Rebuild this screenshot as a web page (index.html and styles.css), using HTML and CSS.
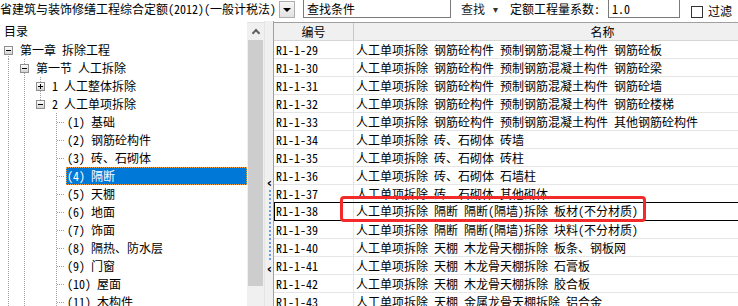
FILE: index.html
```html
<!DOCTYPE html>
<html lang="zh-CN">
<head>
<meta charset="UTF-8">
<title>定额查询</title>
<link rel="stylesheet" href="styles.css">
</head>
<body>
<div class="app">
  <div class="toolbar">
    <div class="combo-text">省建筑与装饰修缮工程综合定额(2012)(一般计税法)</div>
    <div class="combo-btn"><span class="tri"></span></div>
    <div class="search-box">查找条件</div>
    <div class="find">查找</div>
    <div class="find-arrow">▾</div>
    <div class="coef-label">定额工程量系数:</div>
    <div class="coef-box">1.0</div>
    <div class="check"></div>
    <div class="check-label">过滤</div>
  </div>

  <div class="main">
    <div class="left">
      <div class="tree-pane">
        <div class="pane-title">目录</div>
        <div class="tree">
          <div class="node">
            <span class="cell down"><span class="toggle minus"></span></span>
            <span class="label">第一章 拆除工程</span>
          </div>
          <div class="node">
            <span class="cell vline"></span>
            <span class="cell updown"><span class="toggle minus"></span></span>
            <span class="label">第一节 人工拆除</span>
          </div>
          <div class="node">
            <span class="cell vline"></span>
            <span class="cell vline"></span>
            <span class="cell updown"><span class="toggle plus"></span></span>
            <span class="label">1 人工整体拆除</span>
          </div>
          <div class="node">
            <span class="cell vline"></span>
            <span class="cell vline"></span>
            <span class="cell up"><span class="toggle minus"></span></span>
            <span class="label">2 人工单项拆除</span>
          </div>
          <div class="node">
            <span class="cell vline"></span><span class="cell vline"></span><span class="cell"></span><span class="cell branch"></span>
            <span class="label leaf">(1) 基础</span>
          </div>
          <div class="node">
            <span class="cell vline"></span><span class="cell vline"></span><span class="cell"></span><span class="cell branch"></span>
            <span class="label leaf">(2) 钢筋砼构件</span>
          </div>
          <div class="node">
            <span class="cell vline"></span><span class="cell vline"></span><span class="cell"></span><span class="cell branch"></span>
            <span class="label leaf">(3) 砖、石砌体</span>
          </div>
          <div class="node">
            <span class="cell vline"></span><span class="cell vline"></span><span class="cell"></span><span class="cell branch"></span>
            <span class="label leaf selected">(4) 隔断</span>
          </div>
          <div class="node">
            <span class="cell vline"></span><span class="cell vline"></span><span class="cell"></span><span class="cell branch"></span>
            <span class="label leaf">(5) 天棚</span>
          </div>
          <div class="node">
            <span class="cell vline"></span><span class="cell vline"></span><span class="cell"></span><span class="cell branch"></span>
            <span class="label leaf">(6) 地面</span>
          </div>
          <div class="node">
            <span class="cell vline"></span><span class="cell vline"></span><span class="cell"></span><span class="cell branch"></span>
            <span class="label leaf">(7) 饰面</span>
          </div>
          <div class="node">
            <span class="cell vline"></span><span class="cell vline"></span><span class="cell"></span><span class="cell branch"></span>
            <span class="label leaf">(8) 隔热、防水层</span>
          </div>
          <div class="node">
            <span class="cell vline"></span><span class="cell vline"></span><span class="cell"></span><span class="cell branch"></span>
            <span class="label leaf">(9) 门窗</span>
          </div>
          <div class="node">
            <span class="cell vline"></span><span class="cell vline"></span><span class="cell"></span><span class="cell branch"></span>
            <span class="label leaf">(10) 屋面</span>
          </div>
          <div class="node">
            <span class="cell vline"></span><span class="cell vline"></span><span class="cell"></span><span class="cell branch"></span>
            <span class="label leaf">(11) 木构件</span>
          </div>
        </div>
      </div>
      <div class="vscroll">
        <div class="sb-up"><span class="chev"></span></div>
        <div class="sb-thumb"></div>
        <div class="sb-track"></div>
      </div>
    </div>

    <div class="splitter">
      <span class="sp-arrow">‹</span>
      <span class="sp-dots"></span>
      <span class="sp-arrow">‹</span>
    </div>

    <div class="right">
      <div class="grid">
        <div class="row head">
          <div class="c-code">编号</div>
          <div class="c-name">名称</div>
        </div>
        <div class="row"><div class="c-code">R1-1-29</div><div class="c-name">人工单项拆除 钢筋砼构件 预制钢筋混凝土构件 钢筋砼板</div></div>
        <div class="row"><div class="c-code">R1-1-30</div><div class="c-name">人工单项拆除 钢筋砼构件 预制钢筋混凝土构件 钢筋砼梁</div></div>
        <div class="row"><div class="c-code">R1-1-31</div><div class="c-name">人工单项拆除 钢筋砼构件 预制钢筋混凝土构件 钢筋砼墙</div></div>
        <div class="row"><div class="c-code">R1-1-32</div><div class="c-name">人工单项拆除 钢筋砼构件 预制钢筋混凝土构件 钢筋砼楼梯</div></div>
        <div class="row"><div class="c-code">R1-1-33</div><div class="c-name">人工单项拆除 钢筋砼构件 预制钢筋混凝土构件 其他钢筋砼构件</div></div>
        <div class="row"><div class="c-code">R1-1-34</div><div class="c-name">人工单项拆除 砖、石砌体 砖墙</div></div>
        <div class="row"><div class="c-code">R1-1-35</div><div class="c-name">人工单项拆除 砖、石砌体 砖柱</div></div>
        <div class="row"><div class="c-code">R1-1-36</div><div class="c-name">人工单项拆除 砖、石砌体 石墙柱</div></div>
        <div class="row"><div class="c-code">R1-1-37</div><div class="c-name">人工单项拆除 砖、石砌体 其他砌体</div></div>
        <div class="row focus"><div class="c-code">R1-1-38</div><div class="c-name">人工单项拆除 隔断 隔断(隔墙)拆除 板材(不分材质)</div></div>
        <div class="row"><div class="c-code">R1-1-39</div><div class="c-name">人工单项拆除 隔断 隔断(隔墙)拆除 块料(不分材质)</div></div>
        <div class="row"><div class="c-code">R1-1-40</div><div class="c-name">人工单项拆除 天棚 木龙骨天棚拆除 板条、钢板网</div></div>
        <div class="row"><div class="c-code">R1-1-41</div><div class="c-name">人工单项拆除 天棚 木龙骨天棚拆除 石膏板</div></div>
        <div class="row"><div class="c-code">R1-1-42</div><div class="c-name">人工单项拆除 天棚 木龙骨天棚拆除 胶合板</div></div>
        <div class="row"><div class="c-code">R1-1-43</div><div class="c-name">人工单项拆除 天棚 金属龙骨天棚拆除 铝合金</div></div>
      </div>
      <div class="mark"></div>
    </div>
  </div>
</div>
</body>
</html>
```

FILE: styles.css
```css
body {
    margin: 0;
    background: #fff;
    font-family: "Noto Sans Mono CJK SC", "Noto Sans CJK SC", "DejaVu Sans", sans-serif;
    font-size: 12px;
    color: #000;
}
.app {
    width: 738px;
    height: 306px;
    overflow: hidden;
}

/* toolbar */
.toolbar {
    height: 21px;
    display: flex;
    align-items: flex-start;
    white-space: nowrap;
}
.combo-text {
    width: 279px;
    height: 18px;
    line-height: 18px;
    overflow: hidden;
}
.combo-btn {
    width: 14px;
    height: 15px;
    margin-top: 1px;
    border: 1px solid #adadad;
    background: linear-gradient(#f6f6f6, #e2e2e2);
    display: flex;
    align-items: center;
    justify-content: center;
}
.tri {
    width: 0;
    height: 0;
    border-left: 4px solid transparent;
    border-right: 4px solid transparent;
    border-top: 4px solid #000;
}
.search-box {
    width: 143px;
    height: 17px;
    margin-left: 8px;
    margin-top: -1px;
    border: 1px solid #7a7a7a;
    padding-left: 3px;
    line-height: 18px;
}
.find {
    margin-left: 10px;
    line-height: 18px;
    color: #1a1a1a;
}
.find-arrow {
    margin-left: 8px;
    line-height: 18px;
    font-size: 10px;
    color: #333;
}
.coef-label {
    margin-left: 12px;
    line-height: 18px;
}
.coef-box {
    width: 67px;
    height: 17px;
    margin-left: 8px;
    margin-top: -1px;
    border: 1px solid #7a7a7a;
    padding-left: 3px;
    line-height: 18px;
}
.check {
    width: 10px;
    height: 10px;
    margin-left: 11px;
    margin-top: 6px;
    border: 1px solid #333;
    background: #fff;
}
.check-label {
    margin-left: 5px;
    line-height: 22px;
}

/* main area */
.main {
    display: flex;
    height: 285px;
}
.left {
    width: 264px;
    display: flex;
}
.tree-pane {
    width: 247px;
    overflow: hidden;
}
.pane-title {
    height: 20px;
    line-height: 20px;
    padding-left: 4px;
}
.node {
    height: 18px;
    display: flex;
    align-items: center;
    white-space: nowrap;
}
.cell {
    width: 16px;
    height: 18px;
    flex: none;
    display: flex;
    align-items: center;
    justify-content: center;
    background-repeat: no-repeat;
}
.vline {
    background-image: repeating-linear-gradient(#a0a0a0 0 1px, transparent 1px 2px);
    background-size: 1px 100%;
    background-position: 8px 0;
}
.branch {
    background-image:
        repeating-linear-gradient(#a0a0a0 0 1px, transparent 1px 2px),
        repeating-linear-gradient(to right, #a0a0a0 0 1px, transparent 1px 2px);
    background-size: 1px 100%, 10px 1px;
    background-position: 8px 0, 9px 9px;
}
.down {
    background-image: repeating-linear-gradient(#a0a0a0 0 1px, transparent 1px 2px);
    background-size: 1px 9px;
    background-position: 8px 9px;
}
.up {
    background-image: repeating-linear-gradient(#a0a0a0 0 1px, transparent 1px 2px);
    background-size: 1px 9px;
    background-position: 8px 0;
}
.updown {
    background-image: repeating-linear-gradient(#a0a0a0 0 1px, transparent 1px 2px);
    background-size: 1px 100%;
    background-position: 8px 0;
}
.toggle {
    width: 7px;
    height: 7px;
    border: 1px solid #8e8f8f;
    background: linear-gradient(#fff, #d4d4d4);
    display: flex;
    align-items: center;
    justify-content: center;
    position: relative;
}
.minus::before,
.plus::before {
    content: "";
    width: 5px;
    height: 1px;
    background: #000;
}
.plus::after {
    content: "";
    position: absolute;
    width: 1px;
    height: 5px;
    background: #000;
}
.label {
    margin-left: 3px;
    padding: 0 1px;
    height: 18px;
    line-height: 18px;
}
.leaf {
    margin-left: 2px;
    flex: 1;
}
.selected {
    background: #0078d7;
    color: #fff;
    outline: 1px dotted #f0a040;
    outline-offset: -1px;
}

/* scrollbar */
.vscroll {
    width: 17px;
    display: flex;
    flex-direction: column;
    background: #f0f0f0;
    border-top: 1px solid #e2e2e2;
    margin-top: 1px;
}
.sb-up {
    height: 17px;
    display: flex;
    align-items: center;
    justify-content: center;
}
.chev {
    width: 4px;
    height: 4px;
    border-left: 2px solid #606060;
    border-top: 2px solid #606060;
    transform: rotate(45deg);
    margin-top: 3px;
}
.sb-thumb {
    height: 246px;
    margin: 0 1px;
    background: #cdcdcd;
}
.sb-track {
    flex: 1;
}

/* splitter */
.splitter {
    width: 8px;
    border-left: 1px solid #e4e4e4;
    background: #f0f0f0;
    display: flex;
    flex-direction: column;
    align-items: center;
}
.sp-arrow {
    font-family: "DejaVu Sans", sans-serif;
    font-size: 13px;
    font-weight: bold;
    line-height: 10px;
    height: 10px;
    margin-left: 1px;
}
.sp-arrow:first-child {
    margin-top: 157px;
}
.sp-dots {
    width: 2px;
    height: 72px;
    margin: 2px 0 2px 2px;
    background: repeating-linear-gradient(#6b9be0 0 2px, transparent 2px 4px);
}

/* grid */
.right {
    flex: 1;
    position: relative;
    overflow: hidden;
    border-left: 1px solid #a0a0a0;
}
.grid {
    width: 575px;
    margin-top: 1px;
    border-top: 1px solid #a0a0a0;
}
.row {
    height: 17px;
    display: flex;
    border-bottom: 1px solid #e6e6e6;
    white-space: nowrap;
    line-height: 17px;
}
.c-code {
    width: 77px;
    padding-left: 2px;
    border-right: 1px solid #e6e6e6;
}
.c-name {
    flex: 1;
    padding-left: 2px;
}
.head {
    background: #f0f0f0;
    border-bottom: 1px solid #d5d5d5;
}
.head .c-code {
    text-align: center;
    padding-left: 0;
    width: 79px;
    border-right: 1px solid #c8c8c8;
}
.head .c-name {
    text-align: center;
}
.focus {
    outline: 1px solid #000;
    outline-offset: -1px;
    height: 18px;
    margin-top: -1px;
}

/* annotation */
.mark {
    position: absolute;
    left: 66px;
    top: 175px;
    width: 300px;
    height: 20px;
    border: 3px solid #f42a2a;
    border-radius: 4px;
}
```
